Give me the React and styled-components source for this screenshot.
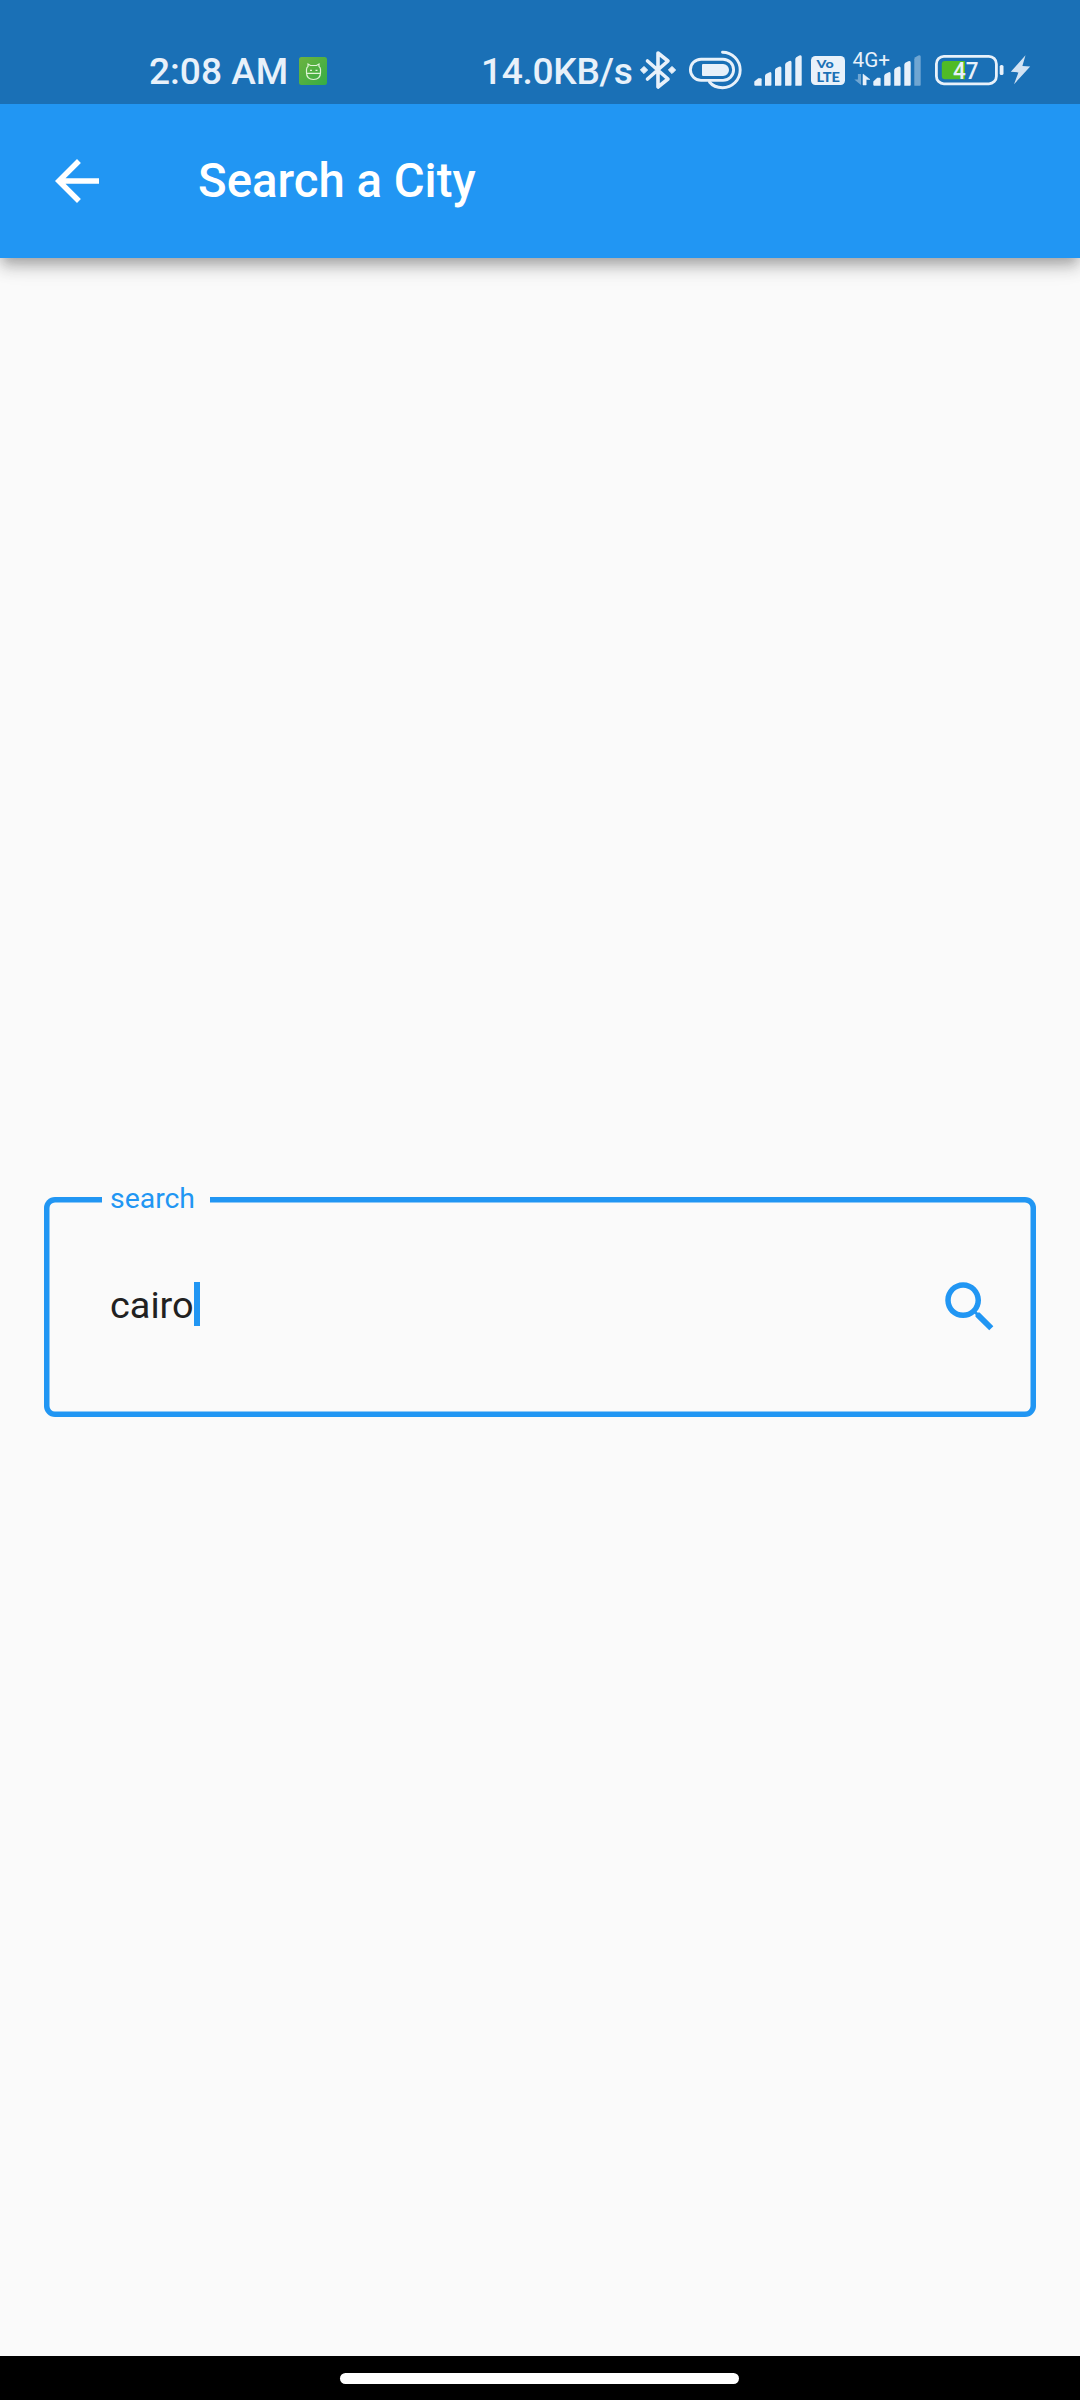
import React from "react";
import styled, { createGlobalStyle } from "styled-components";

const BLUE = "#2196f3";
const STATUS_BLUE = "#1a70b6";
const STATUS_INK = "#e8f1fa";

const GlobalStyle = createGlobalStyle`
  *, *::before, *::after { box-sizing: border-box; }
  body {
    margin: 0;
    background: #fafafa;
    font-family: Roboto, "Noto Sans", sans-serif;
  }
`;

const Screen = styled.div`
  display: flex;
  flex-direction: column;
  width: 1080px;
  height: 2400px;
  overflow: hidden;
  background: #fafafa;
`;

const StatusBar = styled.header`
  flex: none;
  display: flex;
  justify-content: space-between;
  height: 104px;
  padding: 38px 49px 0 149px;
  background: ${STATUS_BLUE};
  z-index: 2;
`;

const StatusGroup = styled.div`
  display: flex;
  align-items: center;
  height: 66px;
`;

const StatusText = styled.span`
  width: ${(p) => p.$width}px;
  padding-top: 2px;
  color: ${STATUS_INK};
  font-size: 37.1px;
  font-weight: 500;
  line-height: 66px;
  letter-spacing: ${(p) => p.$spacing || 0}px;
  white-space: nowrap;
`;

const Glyph = styled.svg`
  flex: none;
  display: block;
  overflow: visible;
  margin-left: ${(p) => p.$before || 0}px;
`;

const AppBar = styled.div`
  flex: none;
  display: flex;
  align-items: center;
  gap: 88px;
  height: 154px;
  padding-left: 44px;
  background: ${BLUE};
  box-shadow:
    0 5.5px 11px -2.75px rgba(0, 0, 0, 0.2),
    0 11px 13.75px rgba(0, 0, 0, 0.14),
    0 2.75px 27.5px rgba(0, 0, 0, 0.12);
  z-index: 1;
`;

const Title = styled.h1`
  margin: 0;
  color: #fff;
  font-size: 47.3px;
  font-weight: 500;
  line-height: 56px;
  white-space: nowrap;
`;

const Body = styled.main`
  flex: 1;
  display: flex;
  flex-direction: column;
  justify-content: center;
  padding: 0 44px;
`;

const Field = styled.div`
  position: relative;
  display: flex;
  align-items: center;
  justify-content: space-between;
  height: 220px;
  padding: 0 33px 0 66px;
  border-radius: 11px;
  box-shadow: inset 0 0 0 5.5px ${BLUE};
`;

const FieldLabel = styled.label`
  position: absolute;
  left: 58px;
  top: -15px;
  width: 108px;
  padding-left: 8px;
  background: #fafafa;
  color: ${BLUE};
  font-size: 28.4px;
  line-height: 34px;
`;

const Value = styled.div`
  display: flex;
  align-items: center;
  margin-bottom: 4px;
  color: #212121;
  font-size: 37.84px;
  line-height: 44px;
`;

const Caret = styled.span`
  width: 5.5px;
  height: 44px;
  margin: -2px 0 0 0.5px;
  background: ${BLUE};
`;

const NavBar = styled.footer`
  flex: none;
  display: flex;
  justify-content: center;
  height: 44px;
  padding: 17px 1px 0 0;
  background: #000;
`;

const NavPill = styled.div`
  width: 399px;
  height: 11px;
  border-radius: 5.5px;
  background: #fff;
`;

const AppBadge = () => (
  <Glyph width="28" height="28" viewBox="0 0 28 28">
    <defs>
      <linearGradient id="badge" x1="0" y1="0" x2="1" y2="1">
        <stop offset="0" stopColor="#6db33f" />
        <stop offset="1" stopColor="#35ad45" />
      </linearGradient>
    </defs>
    <rect width="28" height="28" rx="2.5" fill="url(#badge)" />
    <g fill="none" stroke="#e0f3d6" strokeWidth="1.2">
      <path d="M7.5 15.5V12.5Q7.5 10.5 9 9.5V7L11.5 8.5H17.5L20 7V9.5Q21.5 10.5 21.5 12.5V15.5Q21.5 22.5 14.5 22.5T7.5 15.5Z" />
      <path d="M7.5 16.3H21.5M11 13.4H13M16.5 13.4H18.5" />
    </g>
  </Glyph>
);

const Bluetooth = () => (
  <Glyph width="37" height="66" viewBox="640 38 37 66">
    <path
      d="M647.5 61L668 79L658 87V53L668 61L647.5 79"
      fill="none"
      stroke={STATUS_INK}
      strokeWidth="3.6"
      strokeLinecap="round"
      strokeLinejoin="round"
    />
    <path
      d="M644 66.4L647.6 70L644 73.6L640.4 70ZM672 66.4L675.6 70L672 73.6L668.4 70Z"
      fill={STATUS_INK}
      stroke={STATUS_INK}
      strokeLinejoin="round"
    />
  </Glyph>
);

const Clip = () => (
  <Glyph $before={12} width="53" height="66" viewBox="689 38 53 66">
    <rect x="690.4" y="59.2" width="43.2" height="21.2" rx="10.6" fill="none" stroke={STATUS_INK} strokeWidth="2.9" />
    <path d="M703 64H723A6 6 0 0 1 723 76H703Q702 76 702 75V65Q702 64 703 64Z" fill={STATUS_INK} />
    <path
      d="M722.5 52.3A17.7 17.7 0 0 1 722.5 87.7Q714 87.7 709.5 82"
      fill="none"
      stroke={STATUS_INK}
      strokeWidth="2.9"
      strokeLinecap="round"
    />
  </Glyph>
);

const bar = (x, top) =>
  `M${x} 85.7V${top + 4}Q${x} ${top + 2.8} ${x + 1} ${top + 2}L${x + 4} ${top + 0.4}Q${x + 6.4} ${top - 0.6} ${x + 6.4} ${top + 1.6}V84.9Q${x + 6.4} 85.7 ${x + 5.6} 85.7Z`;

const Signal = () => (
  <Glyph $before={12} width="48" height="66" viewBox="754 38 48 66">
    <path d="M754.3 84.7V81.5L758.3 78.3H760.6Q761.6 78.3 761.6 79.3V85.7H755.3Q754.3 85.7 754.3 84.7Z" fill={STATUS_INK} />
    <path d={[bar(765, 72), bar(775, 66.3), bar(785.1, 60.7), bar(795.3, 55.2)].join("")} fill={STATUS_INK} />
  </Glyph>
);

const VoLte = () => (
  <Glyph $before={9} width="34" height="66" viewBox="811 38 34 66">
    <rect x="811" y="56" width="34" height="29" rx="4.5" fill={STATUS_INK} />
    <g fill={STATUS_BLUE} fontFamily="Lato, Roboto, sans-serif" fontWeight="900">
      <text x="816.6" y="68" fontSize="11.5" textLength="17" lengthAdjust="spacingAndGlyphs">Vo</text>
      <text x="816.4" y="81.6" fontSize="13.2" textLength="23.5" lengthAdjust="spacingAndGlyphs">LTE</text>
    </g>
  </Glyph>
);

const DataSignal = () => (
  <Glyph $before={7} width="69" height="66" viewBox="852 38 69 66">
    <text x="852.6" y="67.3" fontSize="20" textLength="37.4" lengthAdjust="spacingAndGlyphs" fill={STATUS_INK} fontFamily="Roboto, sans-serif">
      4G+
    </text>
    <path d="M857.9 74H861V85L854.3 79.5H857.9Z" fill={STATUS_INK} opacity="0.42" />
    <path d="M863 85V74L870 79.5H866.2V85Z" fill={STATUS_INK} stroke={STATUS_INK} strokeWidth="0.5" />
    <path d="M873.3 84.7V81.5L877.3 77.7H879.6Q880.6 77.7 880.6 78.7V85.7H874.3Q873.3 85.7 873.3 84.7Z" fill={STATUS_INK} />
    <path d={[bar(884.2, 72), bar(894.2, 66.3), bar(904.3, 60.8)].join("")} fill={STATUS_INK} />
    <path d={bar(914.3, 55.2)} fill={STATUS_INK} opacity="0.42" />
  </Glyph>
);

const Battery = () => (
  <Glyph $before={14} width="69" height="66" viewBox="935 38 69 66">
    <rect x="936.4" y="56.4" width="60" height="27.4" rx="7.5" fill="none" stroke={STATUS_INK} strokeWidth="2.8" />
    <path d="M945 61H965V79.2H945Q941.8 79.2 941.8 76V64.2Q941.8 61 945 61Z" fill="#50bb25" />
    <text x="953" y="79" fontSize="23" fontWeight="500" textLength="25.5" lengthAdjust="spacingAndGlyphs" fill={STATUS_INK} fontFamily="Roboto, sans-serif">
      47
    </text>
    <rect x="999.7" y="65" width="3.8" height="10" rx="1.6" fill={STATUS_INK} />
  </Glyph>
);

const Bolt = () => (
  <Glyph $before={6} width="21" height="66" viewBox="1010 38 21 66">
    <path d="M1025.5 55.2L1010.8 71.8L1018.4 72.4L1014 84.3L1030.2 66.6L1022.4 66Z" fill="#d3e3f3" />
  </Glyph>
);

const BackArrow = () => (
  <Glyph width="66" height="66" viewBox="0 0 24 24" fill="#fff">
    <path d="M20 11H7.83l5.59-5.59L12 4l-8 8 8 8 1.41-1.41L7.83 13H20v-2z" />
  </Glyph>
);

const SearchIcon = () => (
  <Glyph width="66" height="66" viewBox="0 0 24 24" fill={BLUE}>
    <path d="M15.5 14h-.79l-.28-.27C15.41 12.59 16 11.11 16 9.5 16 5.91 13.09 3 9.5 3S3 5.91 3 9.5 5.91 16 9.5 16c1.61 0 3.09-.59 4.23-1.57l.27.28v.79l5 4.99L20.49 19l-4.99-5zm-6 0C7.01 14 5 11.99 5 9.5S7.01 5 9.5 5 14 7.01 14 9.5 11.99 14 9.5 14z" />
  </Glyph>
);

export default function App() {
  return (
    <Screen>
      <GlobalStyle />
      <StatusBar>
        <StatusGroup>
          <StatusText $width={150}>2:08 AM</StatusText>
          <AppBadge />
        </StatusGroup>
        <StatusGroup>
          <StatusText $width={159} $spacing={-0.3}>14.0KB/s</StatusText>
          <Bluetooth />
          <Clip />
          <Signal />
          <VoLte />
          <DataSignal />
          <Battery />
          <Bolt />
        </StatusGroup>
      </StatusBar>
      <AppBar>
        <BackArrow />
        <Title>Search a City</Title>
      </AppBar>
      <Body>
        <Field>
          <FieldLabel>search</FieldLabel>
          <Value>
            cairo
            <Caret />
          </Value>
          <SearchIcon />
        </Field>
      </Body>
      <NavBar>
        <NavPill />
      </NavBar>
    </Screen>
  );
}
